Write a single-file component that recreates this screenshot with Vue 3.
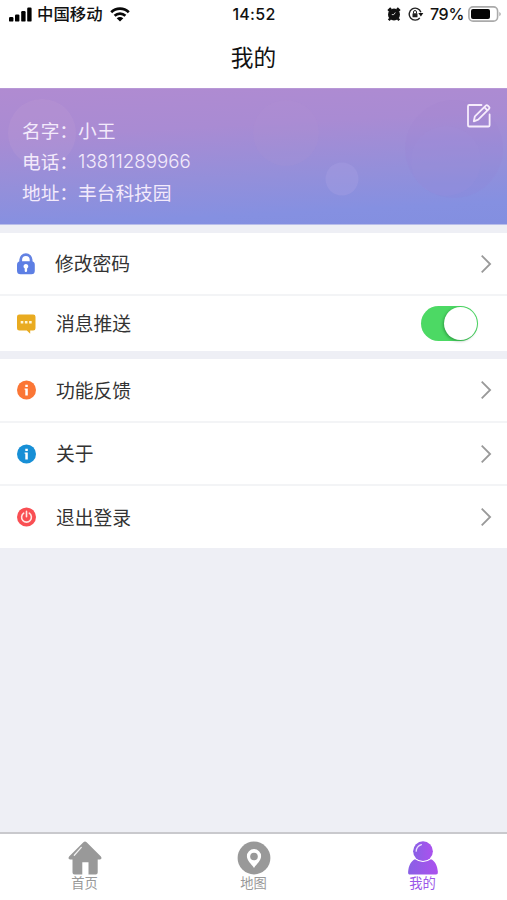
<script setup>
import { ref } from 'vue'

const profile = [
  { label: '名字：', value: '小王' },
  { label: '电话：', value: '13811289966', numeric: true },
  { label: '地址：', value: '丰台科技园' },
]
const pushEnabled = ref(true)
const active = ref('me')
</script>

<template>
  <div class="page">
    <header class="status">
      <div class="carrier">
        <svg class="signal" width="23" height="15" viewBox="0 0 23 15">
          <rect x="0" y="10" width="4.4" height="4.6" rx="1.2" />
          <rect x="6" y="7.4" width="4.4" height="7.2" rx="1.2" />
          <rect x="12.2" y="4" width="4.4" height="10.6" rx="1.2" />
          <rect x="18.2" y="0.5" width="4.4" height="14.1" rx="1.2" />
        </svg>
        <span class="operator">中国移动</span>
        <svg class="wifi" width="20" height="15" viewBox="0 0 20 15">
          <path d="M1.2 5.3C6.1.5 13.9.5 18.8 5.3M4.6 8.8C7.7 5.9 12.3 5.9 15.4 8.8" fill="none" stroke="#080808" stroke-width="2.7" />
          <path d="M6.7 11.2Q10 8.6 13.3 11.2L10 14.6Z" />
        </svg>
      </div>
      <span class="time">14:52</span>
      <div class="indicators">
        <svg class="alarm" width="14" height="14" viewBox="0 0 14 14">
          <path d="M1.2 3.8 4 1.2M12.8 3.8 10 1.2M3.2 11.5 1.8 13.2M10.8 11.5l1.4 1.7" stroke="#111" stroke-width="2.4" />
          <circle cx="7" cy="7.4" r="6" fill="#111" />
          <path d="M8.3 5.5 6.8 7.6H4.8" fill="none" stroke="#ccc" stroke-width="1" />
        </svg>
        <svg class="lock-rotation" width="16" height="14" viewBox="0 0 16 14">
          <path d="M12.9 5.2A6 6 0 1 0 11.8 11" fill="none" stroke="#222" stroke-width="1.4" />
          <path d="M10.3 6.1h5L12.9 9.5Z" fill="#111" />
          <rect x="4.5" y="6.3" width="5" height="4" rx=".6" fill="#222" />
          <path d="M5.5 6.5V5a1.5 1.5 0 0 1 3 0v1.5" fill="none" stroke="#222" />
        </svg>
        <span class="percent">79%</span>
        <svg class="battery" width="34" height="16" viewBox="0 0 34 16">
          <rect x=".9" y=".9" width="28.7" height="14.2" rx="4.2" fill="#fff" stroke="#aaa" stroke-width="1.6" />
          <rect x="3" y="3" width="19" height="10" rx="2" fill="#050505" />
          <path d="M31.3 5.7q3 2.3 0 4.6Z" fill="#aaa" />
        </svg>
      </div>
    </header>
    <h1 class="title">我的</h1>

    <section class="banner">
      <svg class="bubbles" width="507" height="135" viewBox="0 0 507 135">
        <circle cx="42" cy="44" r="34" fill="#cba8d4" opacity=".17" />
        <circle cx="286" cy="44" r="33" fill="#bf9fd2" opacity=".09" />
        <circle cx="342" cy="90" r="16.5" fill="#a9a0e2" opacity=".36" />
        <circle cx="454" cy="60" r="49" fill="#9a72d2" opacity=".08" />
        <circle cx="446" cy="72" r="35" fill="#a890da" opacity=".12" />
      </svg>
      <dl class="profile">
        <div v-for="item in profile" :key="item.label" class="line">
          <dt>{{ item.label }}</dt>
          <dd :class="{ numeric: item.numeric }">{{ item.value }}</dd>
        </div>
      </dl>
      <svg class="edit" width="26" height="26" viewBox="0 0 26 26" fill="none" stroke="#f7edfc" stroke-width="1.8" stroke-linejoin="round" stroke-linecap="round">
        <path d="M15.5 2H3.3Q2 2 2 3.3v18.9q0 1.3 1.3 1.3h19q1.3 0 1.3-1.3V11.5" />
        <path d="m7.8 18.3 1.1-5L19.8 2.6q1-.9 2 0l1.2 1.2q1 1 0 2L12.2 16.6ZM18.3 4.2l3.1 3.1" />
      </svg>
    </section>

    <section class="group first">
      <div class="row">
        <svg class="icon" width="20" height="22" viewBox="0 0 20 22">
          <path d="M4.7 10V6.8a5.2 5.2 0 0 1 10.4 0V10" fill="none" stroke="#6382e3" stroke-width="2.8" />
          <rect x="1" y="8.2" width="17.8" height="13" rx="3.5" fill="#5d7fe4" />
          <path d="M9.9 11a2.4 2.4 0 0 1 1.2 4.5v2.3a1.2 1.2 0 0 1-2.4 0v-2.3A2.4 2.4 0 0 1 9.9 11Z" fill="#fff" />
        </svg>
        <span class="label">修改密码</span>
        <svg class="arrow" width="12" height="20" viewBox="0 0 12 20"><path d="m1.7 1.7 8.4 8.3-8.4 8.3" /></svg>
      </div>
      <div class="row push">
        <svg class="icon" width="20" height="20" viewBox="0 0 20 20">
          <path d="M3.3 .5h13.9q2.3 0 2.3 2.3v11.4q0 2.3-2.3 2.3h-3v3.2l-3.4-3.2H3.3Q1 16.5 1 14.2V2.8Q1 .5 3.3 .5Z" fill="#e9ab20" />
          <path d="M4.7 7h2.6v2.6H4.7zM8.9 7h2.6v2.6H8.9zM13.1 7h2.6v2.6h-2.6z" fill="#fff6d7" />
        </svg>
        <span class="label">消息推送</span>
        <button class="switch" :class="{ on: pushEnabled }" role="switch" :aria-checked="pushEnabled" @click="pushEnabled = !pushEnabled">
          <span class="knob"></span>
        </button>
      </div>
    </section>

    <section class="group second">
      <div class="row">
        <svg class="icon" width="20" height="20" viewBox="0 0 20 20">
          <circle cx="10.5" cy="10" r="9.5" fill="#fb7635" />
          <path d="M9.3 4.7h2.5v2.4H9.3zM8.6 8.4h3.2v7.1H9.3v-5.7h-.7Z" fill="#fff" />
        </svg>
        <span class="label">功能反馈</span>
        <svg class="arrow" width="12" height="20" viewBox="0 0 12 20"><path d="m1.7 1.7 8.4 8.3-8.4 8.3" /></svg>
      </div>
      <div class="row">
        <svg class="icon" width="20" height="20" viewBox="0 0 20 20">
          <circle cx="10.5" cy="10" r="9.5" fill="#178fd6" />
          <path d="M9.3 4.7h2.5v2.4H9.3zM8.6 8.4h3.2v7.1H9.3v-5.7h-.7Z" fill="#fff" />
        </svg>
        <span class="label">关于</span>
        <svg class="arrow" width="12" height="20" viewBox="0 0 12 20"><path d="m1.7 1.7 8.4 8.3-8.4 8.3" /></svg>
      </div>
      <div class="row">
        <svg class="icon" width="20" height="20" viewBox="0 0 20 20">
          <circle cx="10.5" cy="10" r="9.5" fill="#f94f53" />
          <path d="M7.7 6.2a4.9 4.9 0 1 0 5.6 0M10.5 4.4v5.4" fill="none" stroke="#ffe7e5" stroke-width="1.6" stroke-linecap="round" />
        </svg>
        <span class="label">退出登录</span>
        <svg class="arrow" width="12" height="20" viewBox="0 0 12 20"><path d="m1.7 1.7 8.4 8.3-8.4 8.3" /></svg>
      </div>
    </section>

    <nav class="tabs">
      <a class="tab" :class="{ active: active === 'home' }" @click="active = 'home'">
        <svg width="34" height="34" viewBox="0 0 34 34">
          <path d="M15.4 1.2q1.6-1.2 3.2 0L32.9 15.4q1.6 2.6-1 3h-2.2v13.2q0 2-2 2h-7.2V21.3h-6.2v12.3H6.5q-2 0-2-2V18.4H2.1q-2.6-.4-1-3Z" fill="#999" />
          <path d="M6.3 14.2 13.3 6.4" stroke="#f2f2f2" stroke-width="1.3" stroke-linecap="round" />
        </svg>
        <span>首页</span>
      </a>
      <a class="tab" :class="{ active: active === 'map' }" @click="active = 'map'">
        <svg width="34" height="34" viewBox="0 0 34 34">
          <circle cx="17" cy="17" r="16.4" fill="#999" />
          <path d="M17 8.1a7.1 7.1 0 0 1 7.1 7.2c0 4.4-4.3 7.4-7.1 11.6-2.8-4.2-7.1-7.2-7.1-11.6A7.1 7.1 0 0 1 17 8.1Z" fill="#fff" />
          <circle cx="17" cy="15.5" r="3.8" fill="#999" />
        </svg>
        <span>地图</span>
      </a>
      <a class="tab" :class="{ active: active === 'me' }" @click="active = 'me'">
        <svg width="34" height="34" viewBox="0 0 34 34">
          <defs>
            <linearGradient id="person" x1="0" y1="0" x2="1" y2="0">
              <stop offset="0" stop-color="#8960e5" />
              <stop offset="1" stop-color="#ab51ee" />
            </linearGradient>
          </defs>
          <path d="M9 18.2q8 5.5 16 0c4.3 2 6.3 6.2 6.9 12.8q.2 2.6-1.9 2.6H4q-2.1 0-1.9-2.6C2.7 24.4 4.7 20.2 9 18.2Z" fill="url(#person)" />
          <circle cx="17" cy="10.2" r="9.9" fill="url(#person)" />
          <path d="M10.2 10.2q.2-5 5.2-6.6" fill="none" stroke="#eadcff" stroke-width="1.3" stroke-linecap="round" />
        </svg>
        <span>我的</span>
      </a>
    </nav>
  </div>
</template>

<style>
body {
  margin: 0;
}
</style>

<style scoped>
* {
  box-sizing: border-box;
}
.page {
  display: flex;
  flex-direction: column;
  width: 507px;
  height: 900px;
  overflow: hidden;
  background: #eeeff5;
  color: #333;
  font-family: "Liberation Sans", "Noto Sans CJK SC", sans-serif;
}
svg {
  display: block;
  flex: none;
}
.status {
  display: grid;
  grid-template-columns: 1fr auto 1fr;
  align-items: center;
  height: 28px;
  padding: 0 5px 0 9px;
  background: #fff;
  color: #111;
  font-family: Inter, "Noto Sans CJK SC", sans-serif;
  font-size: 16px;
  font-weight: 500;
  line-height: 28px;
}
.carrier,
.indicators {
  display: flex;
  align-items: center;
}
.operator {
  margin: 0 7px 0 5px;
  font-size: 16.4px;
}
.time {
  margin-right: 3px;
  letter-spacing: 0.3px;
}
.indicators {
  justify-content: flex-end;
}
.percent {
  letter-spacing: -0.3px;
}
.lock-rotation {
  margin: 0 6px 0 7px;
}
.battery {
  margin-left: 4px;
}
.title {
  height: 60px;
  margin: 0;
  background: #fff;
  color: #111;
  font-size: 22.7px;
  font-weight: 400;
  line-height: 61px;
  text-align: center;
}
.banner {
  position: relative;
  display: flex;
  justify-content: space-between;
  height: 137px;
  padding: 27px 15px 0 22px;
  border-top: 1px solid #b898d6;
  border-bottom: 1px solid #b9bee9;
  background: linear-gradient(177deg, #b08bd1 0%, #a98bd3 30%, #948fda 62%, #8590e1 86%, #838fe0 100%);
}
.bubbles {
  position: absolute;
  inset: 0;
}
.profile {
  position: relative;
  margin: 0;
  color: #f3eafb;
  font-size: 18.7px;
  line-height: 31px;
}
.line {
  display: flex;
  height: 31px;
}
dd {
  margin: 0;
}
.numeric {
  font-family: Inter, sans-serif;
  font-weight: 300;
  line-height: 30px;
}
.edit {
  position: relative;
  margin-top: -13px;
}
.group {
  margin-top: 8px;
  background: #fff;
}
.row {
  display: flex;
  align-items: center;
  height: 62px;
  padding: 0 15px 0 16px;
}
.row + .row {
  border-top: 2px solid #f3f4f6;
}
.first .row {
  height: 61px;
}
.first .push {
  height: 57px;
  padding-right: 29px;
}
.second .row:nth-child(2) {
  height: 63px;
}
.second .row:nth-child(3) {
  height: 64px;
}
.icon {
  margin-right: 20px;
}
.first .row:first-child .label {
  margin-left: -1px;
}
.label {
  flex: 1;
  padding-top: 3px;
  font-size: 18.8px;
  line-height: 28px;
}
.arrow {
  fill: none;
  stroke: #999;
  stroke-width: 1.8;
}
.switch {
  display: flex;
  width: 57px;
  height: 35px;
  padding: 1px;
  border: 0;
  border-radius: 18px;
  background: #ddd;
}
.switch.on {
  justify-content: flex-end;
  background: #4cd964;
}
.knob {
  width: 33px;
  height: 33px;
  border-radius: 50%;
  background: #fff;
  box-shadow: -1px 1px 3px rgba(0, 70, 20, 0.4);
}
.tabs {
  display: grid;
  grid-template-columns: repeat(3, 1fr);
  height: 68px;
  margin-top: auto;
  border-top: 2px solid #c9c9cd;
  background: #fff;
}
.tab {
  display: flex;
  flex-direction: column;
  align-items: center;
  padding-top: 7px;
  color: #999;
  font-size: 13.3px;
  line-height: 17px;
}
.tab.active {
  color: #9c57e9;
}
</style>
